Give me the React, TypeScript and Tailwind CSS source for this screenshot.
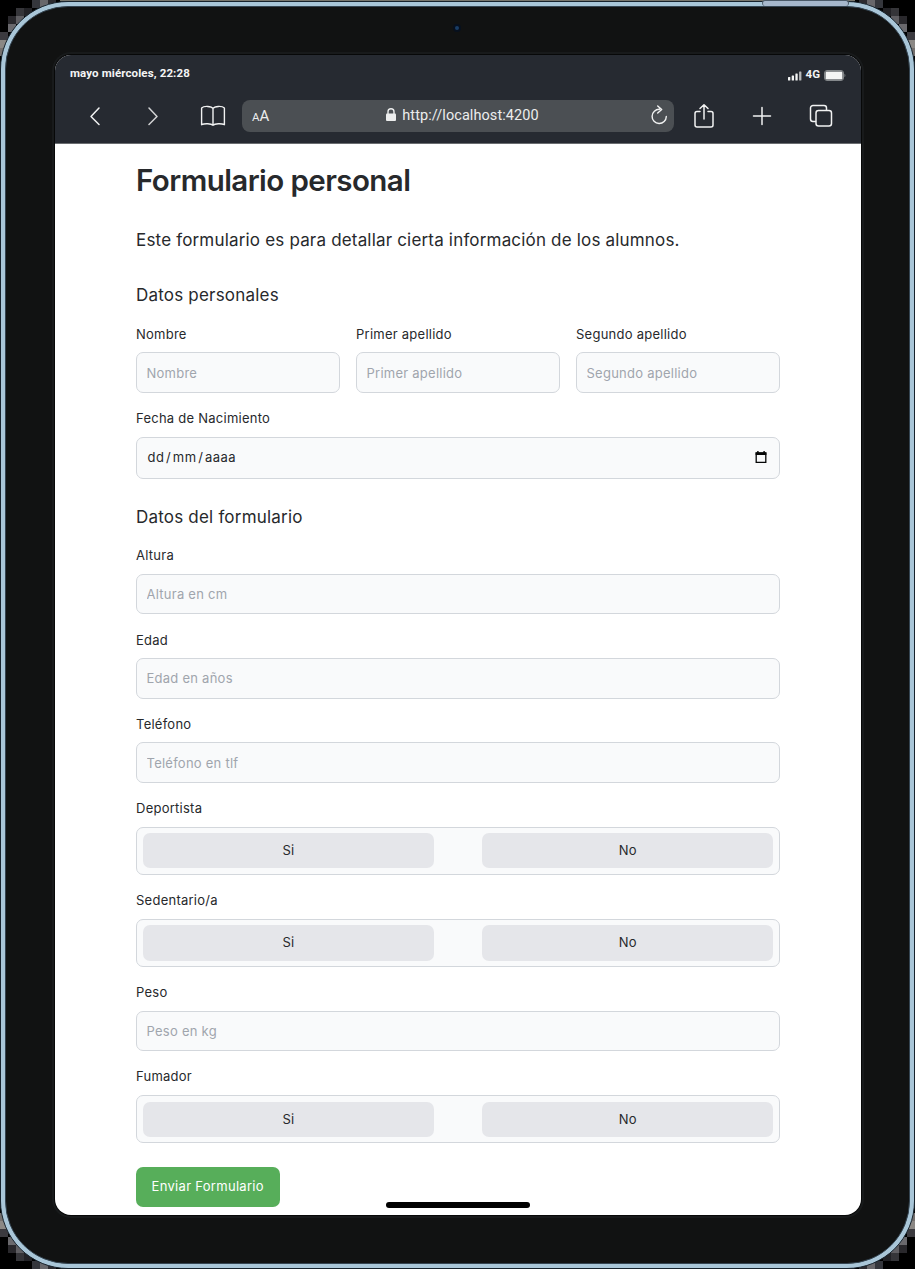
import React from 'react';

const corner: [number, number, string][] = [
  [32, 0, '#34363c'], [40, 0, '#68676b'], [48, 0, '#2c2b30'], [24, 8, '#222226'], [16, 8, '#353539'],
  [8, 16, '#29282c'], [16, 16, '#5f5e62'], [8, 24, '#6a696d'], [0, 32, '#3b3a3f'], [0, 40, '#8b8885'], [0, 48, '#75706e'],
];

function Corner({ className }: { className: string }) {
  return (
    <svg className={`absolute h-20 w-20 ${className}`} viewBox="0 0 80 80" shapeRendering="crispEdges">
      {corner.map(([x, y, fill]) => (
        <rect key={`${x}-${y}`} x={x} y={y} width="8" height="8" fill={fill} />
      ))}
    </svg>
  );
}

function StatusBar() {
  return (
    <div className="flex h-[37px] items-center justify-between pl-[15px] pr-[15px] font-['Roboto',sans-serif]">
      <span className="text-[11.5px] font-bold tracking-[0.12px] text-[#f4f5f5]">mayo miércoles, 22:28</span>
      <div className="flex items-center pt-1">
        <svg width="15" height="10" viewBox="0 0 15 10" fill="#f4f5f5">
          <rect x="0" y="6" width="2.3" height="3.5" rx=".5" />
          <rect x="3.7" y="4.5" width="2.3" height="5" rx=".5" />
          <rect x="7.4" y="2.5" width="2.3" height="7" rx=".5" />
          <rect x="11.1" y="0.5" width="2.3" height="9" rx=".5" opacity=".7" />
        </svg>
        <span className="-mt-0.5 ml-[3px] text-[11.5px] font-bold text-[#f4f5f5]">4G</span>
        <svg className="ml-1" width="22" height="11" viewBox="0 0 22 11">
          <rect x=".5" y=".5" width="19" height="10" rx="2.5" fill="none" stroke="#84888b" />
          <rect x="1.5" y="1.6" width="17" height="7.8" rx="1.2" fill="#f4f5f5" />
          <path d="M20.5 3.8c1.2.5 1.2 2.9 0 3.4z" fill="#84888b" />
        </svg>
      </div>
    </div>
  );
}

function Toolbar() {
  const line = { fill: 'none', stroke: '#f1f2f2', strokeWidth: 1.5, strokeLinecap: 'round', strokeLinejoin: 'round' } as const;
  return (
    <div className="flex h-[52px] items-center pb-1 font-['Roboto',sans-serif]">
      <svg className="ml-[34px]" width="12" height="20" viewBox="0 0 12 20" {...line}><path d="M10 2 2 10.5l8 8" /></svg>
      <svg className="ml-[46px] opacity-85" width="12" height="20" viewBox="0 0 12 20" {...line}><path d="m2 2 8 8.500-8 8" /></svg>
      <svg className="ml-[41px]" width="26" height="24" viewBox="0 0 26 24" {...line} strokeWidth={1.4}>
        <path d="M13 4.500C11.500 2 4 1.700 1.600 3.900V20.700c3-1.400 9.500-1.200 11.400.6 1.900-1.800 8.400-2 11.400-.6V3.900C22 1.700 14.500 2 13 4.500v16.800" />
      </svg>
      <div className="ml-4 flex h-8 w-[432px] shrink-0 items-center rounded-lg bg-[#4b4f53] pl-[10px] pr-[5px] text-[#eceded]">
        <span className="flex w-[34px] items-baseline leading-none"><span className="text-[11.5px]">A</span><span className="text-[15px]">A</span></span>
        <div className="flex flex-1 items-center justify-center pr-[10px]">
          <svg className="-mt-0.5" width="10" height="14" viewBox="0 0 10 14"><rect x="0" y="5.500" width="10" height="7.500" rx="1" fill="#eceded" /><path d="M2 6V3.700a3 3 0 0 1 6 0V6" fill="none" stroke="#eceded" strokeWidth="1.400" /></svg>
          <span className="ml-[6px] text-[14.500px] leading-none tracking-[0.07px]">http://localhost:4200</span>
        </div>
        <svg width="20" height="22" viewBox="0 0 20 22" {...line}><path d="M10.500 4.300A7.100 7.100 0 1 0 17.300 11.500M8.700 1l4 3.500-4 3.600" strokeWidth="1.400" /></svg>
      </div>
      <svg className="ml-[19px] shrink-0" width="22" height="26" viewBox="0 0 22 26" {...line}>
        <path d="M7 8.500H4a2 2 0 0 0-2 2V22a2 2 0 0 0 2 2h14a2 2 0 0 0 2-2V10.500a2 2 0 0 0-2-2h-3M11 16V2M7 5.500 11 1.700l4 3.800" />
      </svg>
      <svg className="ml-[37px] shrink-0" width="20" height="20" viewBox="0 0 20 20" {...line}><path d="M10 1.500v17M1.500 10h17" /></svg>
      <svg className="ml-[37px] shrink-0" width="24" height="24" viewBox="0 0 24 24" {...line}>
        <rect x="7" y="6.500" width="15.500" height="15.500" rx="2.500" /><path d="M6.500 17.500H4A2.500 2.500 0 0 1 1.500 15V4A2.500 2.500 0 0 1 4 1.500h11A2.500 2.500 0 0 1 17.500 4v2" />
      </svg>
    </div>
  );
}

function Field({ label, children }: { label: string; children: React.ReactNode }) {
  return (
    <div className="mb-[17.2px] min-w-0">
      <label className="mb-[9.6px] block h-[17px] whitespace-nowrap text-[13px] leading-[17px] tracking-[0.25px]">{label}</label>
      {children}
    </div>
  );
}

function TextField({ label, placeholder }: { label: string; placeholder: string }) {
  return (
    <Field label={label}>
      <input
        placeholder={placeholder}
        className="block h-[40.4px] w-full rounded-[7px] border border-[#d3d7dc] bg-[#f9fafb] px-[9.5px] text-[13px] tracking-[0.25px] outline-none placeholder:text-[#a0a5ad]"
      />
    </Field>
  );
}

function YesNo({ label }: { label: string }) {
  return (
    <Field label={label}>
      <div className="flex h-[48.4px] justify-between rounded-[7px] border border-[#d3d7dc] bg-[#f9fafb] p-[5.6px]">
        <button className="w-[291.5px] rounded-[7px] bg-[#e5e6ea] text-[13px] tracking-[0.2px]">Si</button>
        <button className="w-[291.5px] rounded-[7px] bg-[#e5e6ea] text-[13px] tracking-[0.2px]">No</button>
      </div>
    </Field>
  );
}

export default function App() {
  return (
    <div className="relative h-[1269px] w-[915px] overflow-hidden bg-black">
      <Corner className="left-0 top-0" />
      <Corner className="right-0 top-0 -scale-x-100" />
      <Corner className="bottom-0 left-0 -scale-y-100" />
      <Corner className="bottom-0 right-0 -scale-100" />
      <div className="absolute inset-x-[60px] top-0 h-px bg-[#77756c]" />
      <div className="absolute inset-x-0 bottom-0 top-px rounded-[68px] border border-[#17232d] bg-[#a9c6d8] p-1">
        <div className="h-full rounded-[63px] border border-[#344451] bg-[#111212] px-[49px] pt-[48px]">
          <div className="flex h-[1160px] w-[806px] flex-col overflow-hidden rounded-[16px] bg-white font-['Inter',sans-serif] text-[#27292c] shadow-[0_0_0_1px_#070808,0_0_0_3px_#181a1b]">
            <header className="h-[88.500px] shrink-0 border-b border-[#6a6d70] bg-[#262a31]">
              <StatusBar />
              <Toolbar />
            </header>
            <main className="mx-[81px] w-[644px] flex-1">
              <h1 className="mt-[16px] h-10 whitespace-nowrap text-[29.5px] font-semibold leading-10 tracking-[-0.570px]">Formulario personal</h1>
              <p className="mt-7 h-6 whitespace-nowrap text-[17px] leading-6 tracking-[0.180px]">Este formulario es para detallar cierta información de los alumnos.</p>
              <h2 className="mt-[31px] h-6 text-[17px] leading-6 tracking-[0.200px]">Datos personales</h2>
              <div className="mt-[19.300px] grid grid-cols-3 gap-4">
                <TextField label="Nombre" placeholder="Nombre" />
                <TextField label="Primer apellido" placeholder="Primer apellido" />
                <TextField label="Segundo apellido" placeholder="Segundo apellido" />
              </div>
              <Field label="Fecha de Nacimiento">
                <div className="flex h-[42.600px] items-center justify-between rounded-[7px] border border-[#d3d7dc] bg-[#f9fafb] pl-[10.500px] pr-[12px] text-[13px]">
                  <span className="flex tracking-[0.450px]">dd<span className="px-[1.700px]">/</span>mm<span className="px-[1.700px]">/</span>aaaa</span>
                  <svg width="12" height="13" viewBox="0 0 12 13"><path d="M1.200 2h9.600v9.400H1.200z" fill="none" stroke="#050606" strokeWidth="1.300" /><path d="M.6 1.400h10.800V4H.6zM2.200 0h1.400v2H2.200zM8.400 0h1.400v2H8.400z" fill="#050606" /></svg>
                </div>
              </Field>
              <h2 className="mb-[18px] mt-[26.300px] h-6 text-[17px] leading-6 tracking-[0.200px]">Datos del formulario</h2>
              <TextField label="Altura" placeholder="Altura en cm" />
              <TextField label="Edad" placeholder="Edad en años" />
              <TextField label="Teléfono" placeholder="Teléfono en tlf" />
              <YesNo label="Deportista" />
              <YesNo label="Sedentario/a" />
              <TextField label="Peso" placeholder="Peso en kg" />
              <YesNo label="Fumador" />
              <button className="mt-[6px] h-10 w-[143.500px] whitespace-nowrap rounded-[7px] bg-[#57ae5a] text-[13px] tracking-[0.300px] text-white">Enviar Formulario</button>
            </main>
          </div>
        </div>
      </div>
      <div className="absolute left-[762px] top-0 h-[6px] w-[87px] rounded-sm border-x border-t border-[#4b5a68] bg-[#a6b7cb]" />
      <div className="absolute left-[453px] top-[24px] flex h-2 w-2 items-center justify-center rounded-full bg-[#07101e]"><div className="h-1 w-1 rounded-full bg-[#193d65]" /></div>
      <div className="absolute left-[386px] top-[1202px] h-[6px] w-[144px] rounded-full bg-black" />
    </div>
  );
}
